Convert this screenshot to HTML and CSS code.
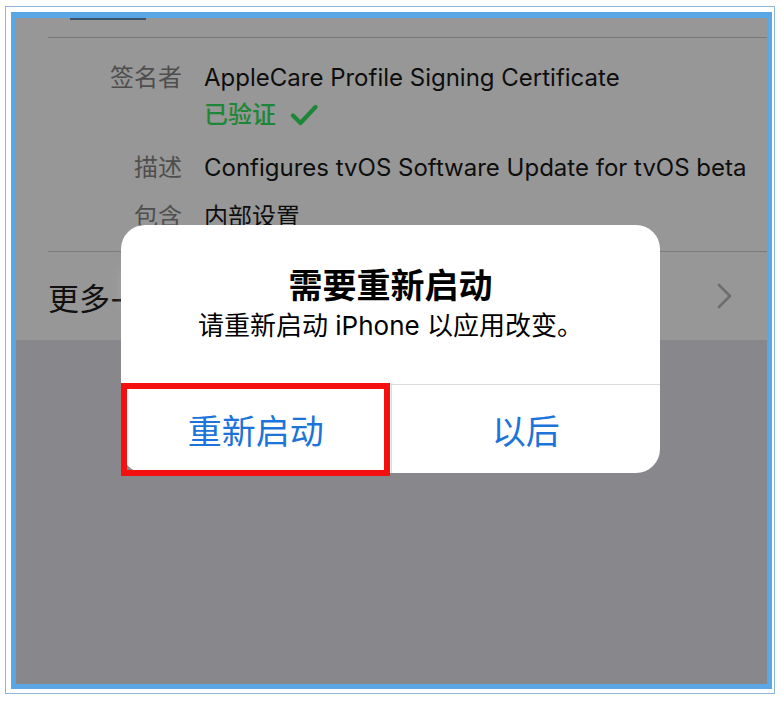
FILE: index.html
```html
<!DOCTYPE html>
<html lang="zh">
<head>
<meta charset="utf-8">
<link rel="stylesheet" href="styles.css">
</head>
<body>
<div class="outer">
  <div class="bluebox">
    <div class="screen">
      <div class="sheet">
        <div class="topbar"></div>
        <div class="sep first"></div>
        <div class="rows">
          <div class="row">
            <div class="label">签名者</div>
            <div class="value">
              <div>AppleCare Profile Signing Certificate</div>
              <div class="verified">已验证
                <svg class="check" width="28" height="22" viewBox="0 0 28 22"><path d="M3 11.5 L10.5 19 L25.5 3" fill="none" stroke="#1d8737" stroke-width="4.2" stroke-linecap="round" stroke-linejoin="round"/></svg>
              </div>
            </div>
          </div>
          <div class="row r2">
            <div class="label">描述</div>
            <div class="value">Configures tvOS Software Update for tvOS beta</div>
          </div>
          <div class="row r3">
            <div class="label">包含</div>
            <div class="value">内部设置</div>
          </div>
        </div>
        <div class="sep"></div>
        <div class="more">
          <span class="more-text">更多-</span>
          <svg class="chev" width="16" height="26" viewBox="0 0 16 26"><path d="M2 2 L13 13 L2 24" fill="none" stroke="#6e6e70" stroke-width="2.6" stroke-linecap="round" stroke-linejoin="round"/></svg>
        </div>
      </div>
      <div class="smudge"></div>
      <div class="alert">
        <div class="alert-body">
          <div class="alert-title">需要重新启动</div>
          <div class="alert-msg">请重新启动 iPhone 以应用改变。</div>
        </div>
        <div class="alert-buttons">
          <div class="btn">重新启动</div>
          <div class="btn">以后</div>
        </div>
      </div>
      <div class="highlight"></div>
    </div>
  </div>
</div>
</body>
</html>
```
FILE: styles.css
```css
* { box-sizing: border-box; }
html, body { margin: 0; padding: 0; background: #ffffff; }
body {
  font-family: "Inter", "Noto Sans CJK SC", sans-serif;
}
.outer {
  margin: 6px 0 0 5px;
  width: 770px;
  border: 1px solid #8db6da;
  padding: 5px 2px 4px 5px;
  background: #ffffff;
}
.bluebox {
  border: 5px solid #5ba7e6;
  border-top-width: 6px;
  width: 761px;
}
.screen {
  position: relative;
  width: 751px;
  height: 666px;
  background: #88878c;
  overflow: hidden;
}
.sheet {
  height: 322px;
  background: #979797;
  position: relative;
}
.topbar {
  margin-left: 54px;
  width: 76px;
  height: 2px;
  background: #3a536b;
}
.sep {
  margin-left: 32px;
  height: 1px;
  background: #7a7a7a;
}
.sep.first { margin-top: 17px; }
.rows {
  padding-top: 25px;
  height: 213px;
}
.row {
  display: grid;
  grid-template-columns: 166px auto;
  column-gap: 22px;
  font-size: 24px;
  line-height: 30px;
}
.r2 { margin-top: 23px; }
.r3 { margin-top: 19px; }
.label {
  text-align: right;
  color: #4e4e4e;
}
.value {
  color: #0e0e0e;
  white-space: nowrap;
}
.verified {
  margin-top: 7px;
  color: #1d8737;
  font-weight: 500;
  display: flex;
  align-items: center;
  gap: 14px;
}
.check { display: block; }
.more {
  display: flex;
  align-items: center;
  justify-content: space-between;
  padding: 0 34px 0 32px;
  height: 88px;
}
.more-text {
  font-size: 31px;
  color: #111111;
}
.chev { display: block; }
.smudge {
  position: absolute;
  left: 110px;
  top: 252px;
  width: 60px;
  height: 34px;
  background: #b4b4b4;
  filter: blur(8px);
}
.alert {
  position: absolute;
  left: 105px;
  top: 207px;
  width: 539px;
  height: 248px;
  background: #ffffff;
  border-radius: 24px;
  display: flex;
  flex-direction: column;
}
.alert-body {
  height: 160px;
  border-bottom: 1px solid #dcdce0;
  display: flex;
  flex-direction: column;
  align-items: center;
  padding-top: 40px;
}
.alert-title {
  font-size: 34px;
  font-weight: 600;
  line-height: 42px;
  color: #000000;
}
.alert-msg {
  font-size: 26px;
  line-height: 32px;
  color: #000000;
  margin-top: 3px;
}
.alert-buttons {
  flex: 1;
  display: grid;
  grid-template-columns: 1fr 1fr;
}
.btn {
  display: flex;
  align-items: center;
  justify-content: center;
  font-size: 34px;
  color: #1c73d9;
}
.btn + .btn { border-left: 1px solid #dcdce0; }
.highlight {
  position: absolute;
  left: 105px;
  top: 365px;
  width: 269px;
  height: 93px;
  border: 6px solid #f4100f;
}
```
